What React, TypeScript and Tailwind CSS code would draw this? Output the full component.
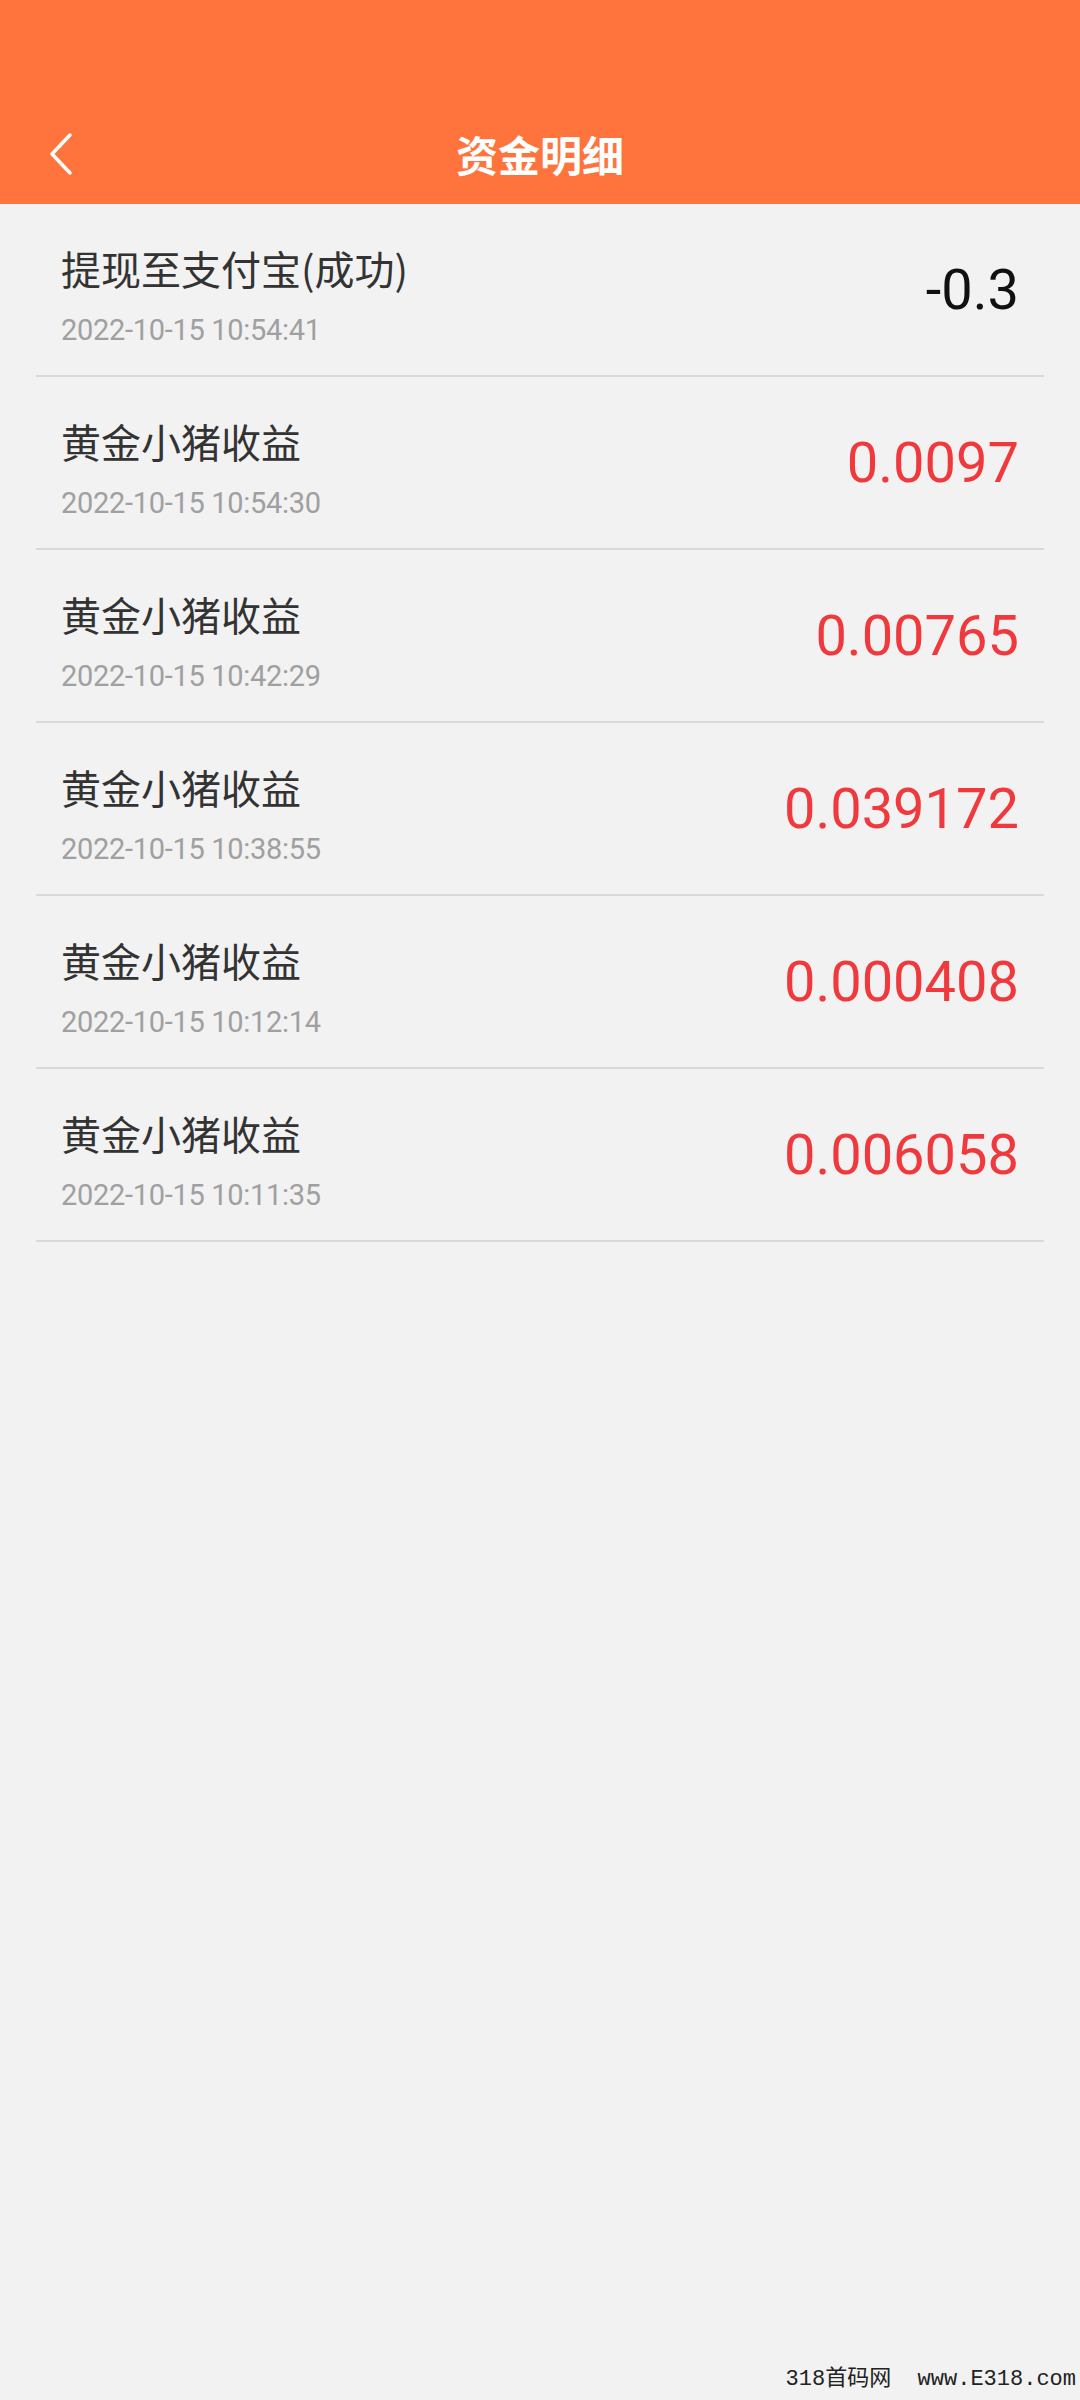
import React from 'react';

type Record = {
  title: string;
  time: string;
  amount: string;
  negative?: boolean;
};

const RECORDS: Record[] = [
  { title: '提现至支付宝(成功)', time: '2022-10-15 10:54:41', amount: '-0.3', negative: true },
  { title: '黄金小猪收益', time: '2022-10-15 10:54:30', amount: '0.0097' },
  { title: '黄金小猪收益', time: '2022-10-15 10:42:29', amount: '0.00765' },
  { title: '黄金小猪收益', time: '2022-10-15 10:38:55', amount: '0.039172' },
  { title: '黄金小猪收益', time: '2022-10-15 10:12:14', amount: '0.000408' },
  { title: '黄金小猪收益', time: '2022-10-15 10:11:35', amount: '0.006058' },
];

const cjk = { fontFamily: '"Noto Sans CJK SC", "Noto Sans", sans-serif' };
const num = { fontFamily: 'Roboto, "Noto Sans", sans-serif' };

export default function App() {
  return (
    <div className="min-h-[2400px] w-[1080px] bg-[#f2f2f2] flex flex-col">
      {/* Header */}
      <header className="bg-[#ff743c] h-[204px] pt-[104px]">
        <div className="h-[100px] grid grid-cols-[1fr_auto_1fr] items-center">
          <div className="pl-[46px] flex items-center">
            <svg width="28" height="44" viewBox="0 0 28 44" fill="none">
              <path d="M24 3 L6 22 L24 41" stroke="white" strokeWidth="3.5" strokeLinecap="round" strokeLinejoin="round" />
            </svg>
          </div>
          <h1 className="text-white text-[42px] font-bold leading-none" style={cjk}>
            资金明细
          </h1>
          <div />
        </div>
      </header>

      {/* Records */}
      <ul className="mx-[36px]">
        {RECORDS.map((r, i) => (
          <li
            key={i}
            className="h-[173px] border-b-2 border-[#d9d9d9] flex justify-between items-stretch px-[25px]"
          >
            <div className="pt-[40px]">
              <p className="text-[40px] leading-[48px] text-[#333333]" style={cjk}>
                {r.title}
              </p>
              <p className="mt-[20px] text-[29px] leading-[36px] tracking-[-0.3px] text-[#a0a0a0]" style={num}>
                {r.time}
              </p>
            </div>
            <span
              className={`self-center text-[56px] leading-none ${r.negative ? 'text-[#111111]' : 'text-[#f0393d]'}`}
              style={num}
            >
              {r.amount}
            </span>
          </li>
        ))}
      </ul>

      <div className="flex-1" />

      {/* Watermark */}
      <p
        className="text-right pr-[4px] pb-[6px] text-[22px] leading-[28px] text-[#222222] whitespace-pre"
        style={{ fontFamily: '"Liberation Mono", "Noto Sans CJK SC", monospace' }}
      >
        318首码网  www.E318.com
      </p>
    </div>
  );
}
